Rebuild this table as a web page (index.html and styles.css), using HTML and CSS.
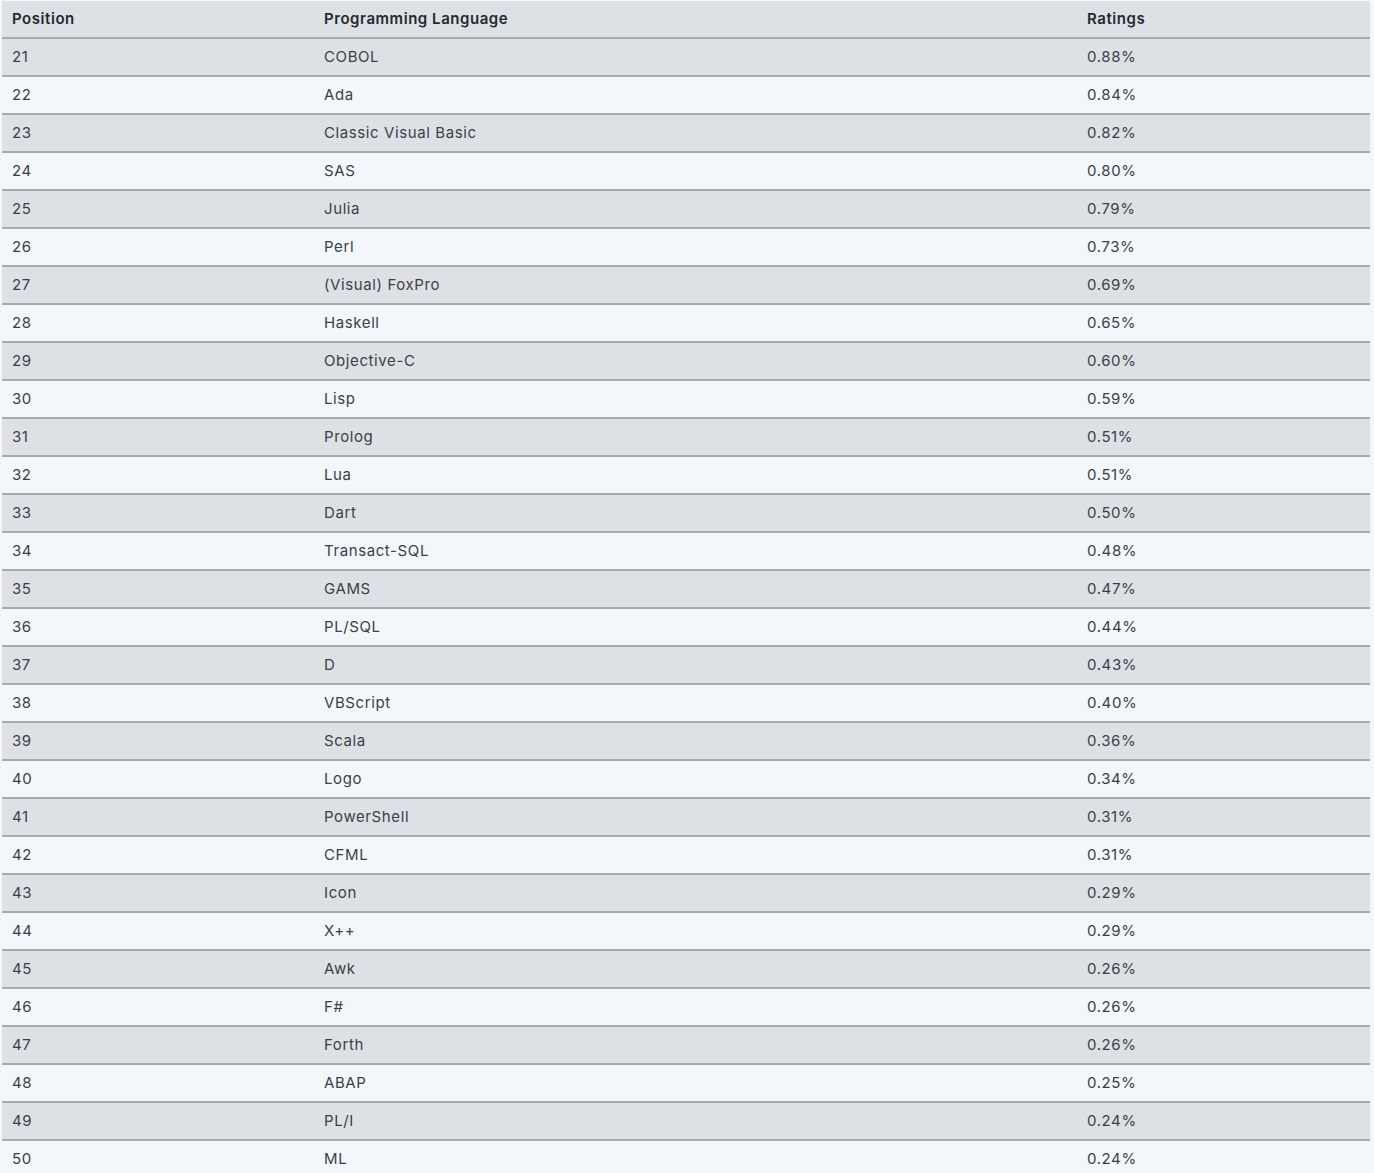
FILE: index.html
```html
<!DOCTYPE html>
<html lang="en">
<head>
  <meta charset="UTF-8" />
  <title>Programming Languages 21-50</title>
  <link rel="stylesheet" href="styles.css">
</head>
<body>

<table class="rank-table">
  <thead>
    <tr>
      <th class="col-pos">Position</th>
      <th class="col-lang">Programming Language</th>
      <th class="col-rate">Ratings</th>
    </tr>
  </thead>
  <tbody>
    <tr><td>21</td><td>COBOL</td><td>0.88%</td></tr>
    <tr><td>22</td><td>Ada</td><td>0.84%</td></tr>
    <tr><td>23</td><td>Classic Visual Basic</td><td>0.82%</td></tr>
    <tr><td>24</td><td>SAS</td><td>0.80%</td></tr>
    <tr><td>25</td><td>Julia</td><td>0.79%</td></tr>
    <tr><td>26</td><td>Perl</td><td>0.73%</td></tr>
    <tr><td>27</td><td>(Visual) FoxPro</td><td>0.69%</td></tr>
    <tr><td>28</td><td>Haskell</td><td>0.65%</td></tr>
    <tr><td>29</td><td>Objective-C</td><td>0.60%</td></tr>
    <tr><td>30</td><td>Lisp</td><td>0.59%</td></tr>
    <tr><td>31</td><td>Prolog</td><td>0.51%</td></tr>
    <tr><td>32</td><td>Lua</td><td>0.51%</td></tr>
    <tr><td>33</td><td>Dart</td><td>0.50%</td></tr>
    <tr><td>34</td><td>Transact-SQL</td><td>0.48%</td></tr>
    <tr><td>35</td><td>GAMS</td><td>0.47%</td></tr>
    <tr><td>36</td><td>PL/SQL</td><td>0.44%</td></tr>
    <tr><td>37</td><td>D</td><td>0.43%</td></tr>
    <tr><td>38</td><td>VBScript</td><td>0.40%</td></tr>
    <tr><td>39</td><td>Scala</td><td>0.36%</td></tr>
    <tr><td>40</td><td>Logo</td><td>0.34%</td></tr>
    <tr><td>41</td><td>PowerShell</td><td>0.31%</td></tr>
    <tr><td>42</td><td>CFML</td><td>0.31%</td></tr>
    <tr><td>43</td><td>Icon</td><td>0.29%</td></tr>
    <tr><td>44</td><td>X++</td><td>0.29%</td></tr>
    <tr><td>45</td><td>Awk</td><td>0.26%</td></tr>
    <tr><td>46</td><td>F#</td><td>0.26%</td></tr>
    <tr><td>47</td><td>Forth</td><td>0.26%</td></tr>
    <tr><td>48</td><td>ABAP</td><td>0.25%</td></tr>
    <tr><td>49</td><td>PL/I</td><td>0.24%</td></tr>
    <tr><td>50</td><td>ML</td><td>0.24%</td></tr>
  </tbody>
</table>

</body>
</html>
```

FILE: styles.css
```css
body {
  margin: 0;
  padding: 1px 4px 0 2px;
  background: #f3f7fc;
  font-family: Inter, "Open Sans", Arial, sans-serif;
  color: #3a3f45;
}

.rank-table {
  width: 1368px;
  border-collapse: collapse;
  font-size: 15px;
  letter-spacing: 0.6px;
}

.rank-table th,
.rank-table td {
  height: 36px;
  padding: 0 10px;
  text-align: left;
  border-bottom: 2px solid #a7abaf;
  line-height: 20px;
}

.rank-table th {
  font-weight: 600;
  letter-spacing: 0.55px;
  color: #24292e;
  background: #dde1e6;
}

.rank-table tbody tr:nth-child(odd) td {
  background: #dde1e6;
}

.rank-table tbody tr:nth-child(even) td {
  background: #f3f7fc;
}

.rank-table tbody tr:last-child td {
  border-bottom: none;
}

.col-pos { width: 292px; }
.col-lang { width: 743px; }
.col-rate { width: auto; }
```
